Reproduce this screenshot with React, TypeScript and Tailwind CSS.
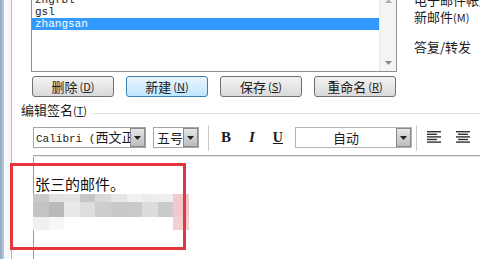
import React from 'react';

const cjk = '"Noto Sans CJK SC", "Liberation Sans", sans-serif';
const serif = '"Liberation Serif", "Noto Sans CJK SC", serif';
const mono = '"Liberation Mono", "Noto Sans CJK SC", monospace';

function Btn({ label, k, hover }: { label: string; k: string; hover?: boolean }) {
  return (
    <div
      className={
        'flex h-[21px] w-[82px] shrink-0 items-center justify-center rounded-[3px] border text-[13px] text-[#1b1b1b] ' +
        (hover
          ? 'border-[#3c7fb1] bg-gradient-to-b from-[#eaf6fd] to-[#bee6fd]'
          : 'border-[#707070] bg-gradient-to-b from-[#f4f4f4] to-[#d9d9d9]')
      }
    >
      <span>{label}</span>
      <span className="ml-[2px] text-[11px]">
        (<span className="underline">{k}</span>)
      </span>
    </div>
  );
}

function Arrow() {
  return (
    <div className="flex h-full w-[15px] shrink-0 items-center justify-center border border-[#8a8a8a] bg-gradient-to-b from-[#e6e6e6] to-[#bdbdbd]">
      <svg width="7" height="4" viewBox="0 0 7 4">
        <path d="M0 0h7L3.5 4z" fill="#222" />
      </svg>
    </div>
  );
}

function AlignIcon({ center }: { center?: boolean }) {
  const rows = [14, 10, 14, 10, 14];
  return (
    <svg width="16" height="13" viewBox="0 0 16 13">
      {rows.map((w, i) => (
        <rect key={i} x={center ? (16 - w) / 2 : 1} y={i * 2.6} width={w} height="1.4" fill="#333" />
      ))}
    </svg>
  );
}

const mosaic = [
  { h: 'h-[8px]', c: ['#c9c9c9', '#e1e1e1', '#e3e3e3', '#c6c6c6', '#d9d9d9', '#e6e6e6', '#f1f1f1', '#ededed', '#eeeeee', '#f3c9cb'] },
  { h: 'h-[15px]', c: ['#c3c3c3', '#b9b9b9', '#e9e9e9', '#dedede', '#cdcdcd', '#c9c9c9', '#cacaca', '#dcdcdc', '#cacaca', '#f3c9cb'] },
  { h: 'h-[13px]', c: ['#f0f0f0', '#f7f7f7', '#ffffff', '#ffffff', '#ffffff', '#ffffff', '#ffffff', '#ffffff', '#ffffff', '#f5d0d2'] },
];

export default function App() {
  return (
    <div
      className="relative flex h-[259px] w-[480px] overflow-hidden bg-white text-[#1b1b1b]"
      style={{ fontFamily: cjk }}
    >
      {/* window frame on the left */}
      <div className="w-[4px] shrink-0 bg-gradient-to-r from-[#8fa5bd] to-[#bccbdb]" />
      <div className="w-[7px] shrink-0 bg-[#f7f8fa]" />
      <div className="w-px shrink-0 bg-[#b9b9b9]" />

      <div className="flex min-w-0 flex-1 flex-col">
        {/* list + right labels */}
        <div className="flex h-[72px] shrink-0">
          <div className="ml-[19px] flex h-[72px] w-[366px] shrink-0 border border-t-0 border-[#8f8f8f]">
            <div className="-mt-[6px] flex flex-1 flex-col text-[11px] leading-[12px]" style={{ fontFamily: mono }}>
              <div className="h-[12px] pl-[3px]">zhgfbl</div>
              <div className="h-[12px] pl-[3px]">gsl</div>
              <div className="h-[12px] bg-[#3399ff] pl-[3px] text-white">zhangsan</div>
            </div>
            <div className="flex w-[17px] flex-col items-center justify-between border-l border-[#e6e6e6] bg-[#f4f4f4] pb-[6px]">
              <svg width="7" height="4" viewBox="0 0 7 4" className="mt-[-1px]">
                <path d="M3.5 0L7 4H0z" fill="#b0b0b0" />
              </svg>
              <svg width="7" height="4" viewBox="0 0 7 4">
                <path d="M0 0h7L3.5 4z" fill="#888" />
              </svg>
            </div>
          </div>
          <div className="ml-[17px] flex min-w-0 flex-col whitespace-nowrap text-[13px] leading-[14px]">
            <div className="-mt-[7px] h-[14px]">电子邮件帐户</div>
            <div className="mt-[3px]">
              新邮件<span className="text-[11px]">(M)</span>
            </div>
            <div className="mt-[16px]">答复/转发</div>
          </div>
        </div>

        {/* buttons */}
        <div className="ml-[20px] mt-[4px] flex gap-[12px]">
          <Btn label="删除" k="D" />
          <Btn label="新建" k="N" hover />
          <Btn label="保存" k="S" />
          <Btn label="重命名" k="R" />
        </div>

        {/* section label */}
        <div className="ml-[9px] mt-[6px] flex h-[14px] items-center text-[13px]">
          <span>编辑签名</span>
          <span className="text-[11px]">
            (<span className="underline">T</span>)
          </span>
          <div className="ml-[6px] mt-[6px] h-px flex-1 bg-[#dde3e8]" />
        </div>

        {/* formatting toolbar */}
        <div className="ml-[21px] mt-[10px] flex h-[21px] items-center">
          <div className="flex h-[21px] w-[113px] shrink-0 items-center border border-[#a5a5a5]">
            <span className="min-w-0 flex-1 overflow-hidden whitespace-nowrap pl-[2px] text-[11px]" style={{ fontFamily: mono }}>
              Calibri (<span className="text-[13px]" style={{ fontFamily: cjk }}>西文正文</span>)
            </span>
            <Arrow />
          </div>
          <div className="ml-[7px] flex h-[21px] w-[46px] shrink-0 items-center border border-[#a5a5a5]">
            <span className="flex-1 pl-[3px] text-[13px]">五号</span>
            <Arrow />
          </div>
          <div className="ml-[9px] h-[26px] w-px shrink-0 bg-[#c9c9c9]" />
          <span className="ml-[12px] text-[15px] font-bold" style={{ fontFamily: serif }}>B</span>
          <span className="ml-[18px] text-[15px] font-bold italic" style={{ fontFamily: serif }}>I</span>
          <span className="ml-[18px] text-[14px] font-bold underline" style={{ fontFamily: serif }}>U</span>
          <div className="ml-[12px] flex h-[21px] w-[117px] shrink-0 items-center border border-[#b5b5b5]">
            <span className="flex-1 text-center text-[13px]">自动</span>
            <Arrow />
          </div>
          <div className="ml-[4px] h-[26px] w-px shrink-0 bg-[#c9c9c9]" />
          <div className="ml-[9px] flex shrink-0 items-center">
            <AlignIcon />
          </div>
          <div className="ml-[13px] flex shrink-0 items-center">
            <AlignIcon center />
          </div>
        </div>

        <div className="ml-[21px] mt-[7px] h-[2px] border-t border-[#a8a8a8] bg-[#e8e8e8]" />

        {/* editor */}
        <div className="ml-[21px] flex flex-1 flex-col border-l border-[#9a9a9a]">
          <div className="ml-[1px] mt-[18px] text-[15px] leading-[18px] text-[#111]">张三的邮件。</div>
          <div className="-ml-px mt-[1px] flex w-[156px] flex-col">
            {mosaic.map((r, i) => (
              <div key={i} className={'flex ' + r.h}>
                {r.c.map((c, j) => (
                  <div key={j} className="flex-1" style={{ background: c }} />
                ))}
              </div>
            ))}
          </div>
        </div>
      </div>

      {/* red annotation box */}
      <div className="absolute left-[10px] top-[163px] h-[87px] w-[176px] border-[3px] border-[#e5363d]" />
    </div>
  );
}
